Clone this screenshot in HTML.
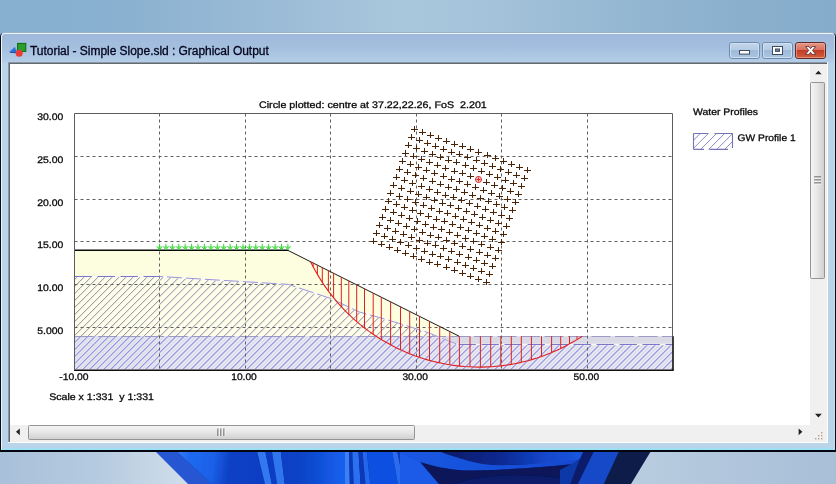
<!DOCTYPE html>
<html><head><meta charset="utf-8"><title>Graphical Output</title>
<style>
html,body{margin:0;padding:0}
body{width:836px;height:484px;overflow:hidden;position:relative;font-family:"Liberation Sans",sans-serif;background:#a3bdd6}
.desk-top{position:absolute;left:0;top:0;width:836px;height:40px;background:linear-gradient(90deg,#86aecf 0%,#8ab1d0 15%,#9dbdd7 35%,#a9c7dc 48%,#a5c3da 58%,#94b7d2 75%,#89afcd 90%,#86accb 100%)}
.desk-bot{position:absolute;left:0;top:450px;width:836px;height:34px;background:linear-gradient(90deg,#a8c0d9 0%,#b5cbe0 12%,#c6d6e6 18%,#cfdce9 22%,#b8ccdf 77%,#b2c7dc 85%,#a8bfd8 100%)}
.win{position:absolute;left:0;top:32px;width:836px;height:420px;box-sizing:border-box;background:#b9d3e9;border:1px solid #0c0c14;border-bottom:2px solid #05050f;border-top-color:rgba(60,80,100,0.25);border-radius:5px 5px 0 0;overflow:hidden}
.win .hl{position:absolute;left:0;top:0;right:0;bottom:0;border:1px solid #eef5fb;border-right-color:#c4daee;border-bottom-color:transparent;border-radius:4px 4px 0 0}
.tbar{position:absolute;left:1px;top:1px;width:832px;height:29px;background:linear-gradient(180deg,#9db8d9 0%,#a4bfde 45%,#b4cee8 100%)}
.bbar{position:absolute;left:1px;top:410px;width:832px;height:7px;background:linear-gradient(180deg,#bcd5e9 0,#b6d5ea 4.6px,#a0def3 5px,#9fe0f4 7px)}
.title{will-change:transform;position:absolute;left:28.6px;top:11.1px;font-size:12px;color:#04041c;-webkit-text-stroke:0.3px #04041c;white-space:nowrap;letter-spacing:-0.035px}
.f1{position:absolute;left:8px;top:62px;width:820px;height:381px;background:#fff}
.f2{position:absolute;left:8px;top:62px;width:819px;height:380px;background:#8d97a3}
.f3{position:absolute;left:9px;top:63px;width:818px;height:379px;background:#626a71}
.client{position:absolute;left:10px;top:64px;width:817px;height:378px;background:#fff}
</style></head><body>
<div class="desk-top"></div>
<div class="desk-bot"></div>
<svg width="836" height="34" viewBox="0 450 836 34" style="position:absolute;left:0;top:450px">
<defs>
<linearGradient id="wg1" x1="0" y1="0" x2="1" y2="0"><stop offset="0" stop-color="#0d40c4"/><stop offset="0.35" stop-color="#0c44c8"/><stop offset="1" stop-color="#1662f0"/></linearGradient>
<linearGradient id="wg2" gradientUnits="userSpaceOnUse" x1="180" y1="451" x2="262" y2="462"><stop offset="0" stop-color="#3278f4"/><stop offset="0.12" stop-color="#1e6af0"/><stop offset="0.42" stop-color="#1a60e8"/><stop offset="0.62" stop-color="#0d40c4"/><stop offset="1" stop-color="#0d3ec4"/></linearGradient>
<linearGradient id="wg3" gradientUnits="userSpaceOnUse" x1="450" y1="0" x2="600" y2="0"><stop offset="0" stop-color="#081c6a"/><stop offset="0.35" stop-color="#0b2a94"/><stop offset="0.65" stop-color="#1448cc"/><stop offset="1" stop-color="#1c5ee8"/></linearGradient>
<linearGradient id="wg4" gradientUnits="userSpaceOnUse" x1="405" y1="0" x2="585" y2="0"><stop offset="0" stop-color="#1a56e0"/><stop offset="0.6" stop-color="#184fd8"/><stop offset="1" stop-color="#1448cc"/></linearGradient>
<filter id="wb" x="-5%" y="-50%" width="110%" height="200%"><feGaussianBlur stdDeviation="0.7"/></filter>
<clipPath id="wc"><polygon points="155,451 651,451 631,484 188,484"/></clipPath>
</defs>
<g clip-path="url(#wc)"><g filter="url(#wb)">
<rect x="140" y="445" width="530" height="45" fill="#0a2a90"/>
<polygon points="140,445 170,445 218,490 170,490" fill="#2557d2"/>
<polygon points="170,445 255,445 267,490 218,490" fill="url(#wg2)"/>
<polygon points="255.5,445 264,445 273,490 266.5,490" fill="#3278f0"/>
<polygon points="264,445 271,445 278,490 273,490" fill="#0d3ec4"/>
<polygon points="271,445 280,445 285.5,490 278,490" fill="#2f74ee"/>
<polygon points="280,445 345,445 345,490 285.5,490" fill="url(#wg1)"/>
<polygon points="345,445 349,445 350,490 345,490" fill="#3a80f5"/>
<polygon points="349,445 352,445 354,490 350,490" fill="#0a38b8"/>
<polygon points="352,445 358,445 361,490 354,490" fill="#2a70f0"/>
<polygon points="358,445 362,445 366,490 361,490" fill="#0a38b8"/>
<polygon points="362,445 366,445 371,490 366,490" fill="#2468ec"/>
<polygon points="366,445 391,445 399,490 371,490" fill="#1050e0"/>
<polygon points="391,445 396,445 405,490 399,490" fill="#2a6cf0"/>
<polygon points="396,445 399,445 409,490 405,490" fill="#0c3cc0"/>
<polygon points="399,445 404,445 414,490 409,490" fill="#2a6cf0"/>
<polygon points="404,445 445,445 445,490 414,490" fill="#0e4ad4"/>
<path d="M430,445 L600,445 L600,468 C575,461 540,464 492,465 C478,464 462,460 438,451 Z" fill="url(#wg3)"/>
<path d="M400,445 L430,445 L438,451 C462,460 478,464 492,465 C520,466 545,463 585,459 L585,463 C545,467 515,469.5 474,470.5 C455,471 440,468 420,462 L400,453 Z" fill="url(#wg4)"/>
<path d="M420,462 C440,468 455,471 474,470.5 C515,469.5 545,467 585,463 L600,462 L600,490 L442,490 Z" fill="#071658"/>
<path d="M440,490 C470,474 520,473 560,478 L580,490 Z" fill="#0a2484" opacity="0.35"/>
<path d="M400,453 L420,462 L444,490 L400,490 Z" fill="#1a5ae8"/>
<polygon points="560,470 575,462 590,451 594,445 600,445 578,490 560,490" fill="#0d38a8"/>
<polygon points="586,445 598,445 576,490 568,490 577,466" fill="#0a1f6a"/>
<polygon points="597,445 623,445 602,490 575,490" fill="#1448c8"/>
<polygon points="622,445 660,445 640,490 601,490" fill="#0a1a4a"/>
</g></g>
</svg>

<div class="win"><div class="tbar"></div><div class="bbar"></div><div class="hl"></div>
<div class="title">Tutorial - Simple Slope.sld : Graphical Output</div>
</div>
<div class="f1"></div><div class="f2"></div><div class="f3"></div><div class="client"></div>
<svg class="chart" width="818" height="379" viewBox="9 63 818 379" style="position:absolute;left:9px;top:63px;will-change:transform">
<defs>
<pattern id="h1" width="6.9" height="6.9" patternUnits="userSpaceOnUse"><rect width="6.9" height="6.9" fill="#fdfdea"/><path d="M-1,7.9 L7.9,-1 M-1,1 L1,-1 M5.9,7.9 L7.9,5.9" stroke="#85859c" stroke-width="0.95" fill="none"/></pattern>
<pattern id="h2" width="6.9" height="6.9" patternUnits="userSpaceOnUse"><rect width="6.9" height="6.9" fill="#e8e8f6"/><path d="M-1,4.45 L4.45,-1 M2.45,7.9 L7.9,2.45" stroke="#d4d4da" stroke-width="1.3" fill="none"/><path d="M-1,7.9 L7.9,-1 M-1,1 L1,-1 M5.9,7.9 L7.9,5.9" stroke="#9292dc" stroke-width="1.1" fill="none"/></pattern>
<clipPath id="cw"><polygon points="74.5,276.5 160.0,276.5 288.3,284.4 331.4,298.7 359.0,311.9 380.5,317.8 404.4,325.0 428.3,332.7 447.5,340.6 458.5,344.5 673.0,344.5 673.0,369.5 74.5,369.5"/></clipPath>
<clipPath id="cu"><rect x="74.5" y="0" width="598.5" height="336.2"/></clipPath>
<clipPath id="cl"><rect x="74.5" y="336.2" width="598.5" height="33.30000000000001"/></clipPath>
</defs>
<polygon points="74.5,250.3 288.3,250.3 459.1,336.2 673.0,336.2 673.0,369.5 74.5,369.5" fill="#fdfddf"/>
<rect x="74.5" y="336.2" width="598.5" height="33.30000000000001" fill="#dadae6"/>
<clipPath id="czl"><rect x="74.5" y="240" width="85.0" height="140"/></clipPath>
<clipPath id="czr"><rect x="159.5" y="240" width="513.5" height="140"/></clipPath>
<g clip-path="url(#cw)">
<g clip-path="url(#cu)"><rect x="74.5" y="250.3" width="598.5" height="85.89999999999998" fill="#fdfdea"/>
<g stroke="#85859c" stroke-width="0.95" fill="none"><path clip-path="url(#czl)" d="M-80.8,372L43.2,248M-73.8,372L50.2,248M-66.8,372L57.2,248M-59.8,372L64.2,248M-52.8,372L71.2,248M-45.8,372L78.2,248M-38.8,372L85.2,248M-31.8,372L92.2,248M-24.8,372L99.2,248M-17.8,372L106.2,248M-10.8,372L113.2,248M-3.8,372L120.2,248M3.2,372L127.2,248M10.2,372L134.2,248M17.2,372L141.2,248M24.2,372L148.2,248M31.2,372L155.2,248M38.2,372L162.2,248M45.2,372L169.2,248M52.2,372L176.2,248M59.2,372L183.2,248M66.2,372L190.2,248M73.2,372L197.2,248M80.2,372L204.2,248M87.2,372L211.2,248M94.2,372L218.2,248M101.2,372L225.2,248M108.2,372L232.2,248M115.2,372L239.2,248M122.2,372L246.2,248M129.2,372L253.2,248M136.2,372L260.2,248M143.2,372L267.2,248M150.2,372L274.2,248M157.2,372L281.2,248M164.2,372L288.2,248M171.2,372L295.2,248M178.2,372L302.2,248"/><path clip-path="url(#czr)" d="M36.3,372L160.3,248M44.3,372L168.3,248M52.3,372L176.3,248M60.3,372L184.3,248M68.3,372L192.3,248M76.3,372L200.3,248M84.3,372L208.3,248M92.3,372L216.3,248M100.3,372L224.3,248M108.3,372L232.3,248M116.3,372L240.3,248M124.3,372L248.3,248M132.3,372L256.3,248M140.3,372L264.3,248M148.3,372L272.3,248M156.3,372L280.3,248M164.3,372L288.3,248M172.3,372L296.3,248M180.3,372L304.3,248M188.3,372L312.3,248M196.3,372L320.3,248M204.3,372L328.3,248M212.3,372L336.3,248M220.3,372L344.3,248M228.3,372L352.3,248M236.3,372L360.3,248M244.3,372L368.3,248M252.3,372L376.3,248M260.3,372L384.3,248M268.3,372L392.3,248M276.3,372L400.3,248M284.3,372L408.3,248M292.3,372L416.3,248M300.3,372L424.3,248M308.3,372L432.3,248M316.3,372L440.3,248M324.3,372L448.3,248M332.3,372L456.3,248M340.3,372L464.3,248M348.3,372L472.3,248M356.3,372L480.3,248M364.3,372L488.3,248M372.3,372L496.3,248M380.3,372L504.3,248M388.3,372L512.3,248M396.3,372L520.3,248M404.3,372L528.3,248M412.3,372L536.3,248M420.3,372L544.3,248M428.3,372L552.3,248M436.3,372L560.3,248M444.3,372L568.3,248M452.3,372L576.3,248M460.3,372L584.3,248M468.3,372L592.3,248M476.3,372L600.3,248M484.3,372L608.3,248M492.3,372L616.3,248M500.3,372L624.3,248M508.3,372L632.3,248M516.3,372L640.3,248M524.3,372L648.3,248M532.3,372L656.3,248M540.3,372L664.3,248M548.3,372L672.3,248M556.3,372L680.3,248M564.3,372L688.3,248M572.3,372L696.3,248M580.3,372L704.3,248M588.3,372L712.3,248M596.3,372L720.3,248M604.3,372L728.3,248M612.3,372L736.3,248M620.3,372L744.3,248M628.3,372L752.3,248M636.3,372L760.3,248M644.3,372L768.3,248M652.3,372L776.3,248M660.3,372L784.3,248M668.3,372L792.3,248M676.3,372L800.3,248M684.3,372L808.3,248M692.3,372L816.3,248M700.3,372L824.3,248"/></g></g>
<g clip-path="url(#cl)"><rect x="74.5" y="336.2" width="598.5" height="35.30000000000001" fill="#e8e8f6"/>
<g stroke="#dcdce4" stroke-width="1.1" fill="none"><path clip-path="url(#czl)" d="M-77.3,372L46.7,248M-70.3,372L53.7,248M-63.3,372L60.7,248M-56.3,372L67.7,248M-49.3,372L74.7,248M-42.3,372L81.7,248M-35.3,372L88.7,248M-28.3,372L95.7,248M-21.3,372L102.7,248M-14.3,372L109.7,248M-7.3,372L116.7,248M-0.3,372L123.7,248M6.7,372L130.7,248M13.7,372L137.7,248M20.7,372L144.7,248M27.7,372L151.7,248M34.7,372L158.7,248M41.7,372L165.7,248M48.7,372L172.7,248M55.7,372L179.7,248M62.7,372L186.7,248M69.7,372L193.7,248M76.7,372L200.7,248M83.7,372L207.7,248M90.7,372L214.7,248M97.7,372L221.7,248M104.7,372L228.7,248M111.7,372L235.7,248M118.7,372L242.7,248M125.7,372L249.7,248M132.7,372L256.7,248M139.7,372L263.7,248M146.7,372L270.7,248M153.7,372L277.7,248M160.7,372L284.7,248M167.7,372L291.7,248M174.7,372L298.7,248M181.7,372L305.7,248"/><path clip-path="url(#czr)" d="M40.3,372L164.3,248M48.3,372L172.3,248M56.3,372L180.3,248M64.3,372L188.3,248M72.3,372L196.3,248M80.3,372L204.3,248M88.3,372L212.3,248M96.3,372L220.3,248M104.3,372L228.3,248M112.3,372L236.3,248M120.3,372L244.3,248M128.3,372L252.3,248M136.3,372L260.3,248M144.3,372L268.3,248M152.3,372L276.3,248M160.3,372L284.3,248M168.3,372L292.3,248M176.3,372L300.3,248M184.3,372L308.3,248M192.3,372L316.3,248M200.3,372L324.3,248M208.3,372L332.3,248M216.3,372L340.3,248M224.3,372L348.3,248M232.3,372L356.3,248M240.3,372L364.3,248M248.3,372L372.3,248M256.3,372L380.3,248M264.3,372L388.3,248M272.3,372L396.3,248M280.3,372L404.3,248M288.3,372L412.3,248M296.3,372L420.3,248M304.3,372L428.3,248M312.3,372L436.3,248M320.3,372L444.3,248M328.3,372L452.3,248M336.3,372L460.3,248M344.3,372L468.3,248M352.3,372L476.3,248M360.3,372L484.3,248M368.3,372L492.3,248M376.3,372L500.3,248M384.3,372L508.3,248M392.3,372L516.3,248M400.3,372L524.3,248M408.3,372L532.3,248M416.3,372L540.3,248M424.3,372L548.3,248M432.3,372L556.3,248M440.3,372L564.3,248M448.3,372L572.3,248M456.3,372L580.3,248M464.3,372L588.3,248M472.3,372L596.3,248M480.3,372L604.3,248M488.3,372L612.3,248M496.3,372L620.3,248M504.3,372L628.3,248M512.3,372L636.3,248M520.3,372L644.3,248M528.3,372L652.3,248M536.3,372L660.3,248M544.3,372L668.3,248M552.3,372L676.3,248M560.3,372L684.3,248M568.3,372L692.3,248M576.3,372L700.3,248M584.3,372L708.3,248M592.3,372L716.3,248M600.3,372L724.3,248M608.3,372L732.3,248M616.3,372L740.3,248M624.3,372L748.3,248M632.3,372L756.3,248M640.3,372L764.3,248M648.3,372L772.3,248M656.3,372L780.3,248M664.3,372L788.3,248M672.3,372L796.3,248M680.3,372L804.3,248M688.3,372L812.3,248M696.3,372L820.3,248M704.3,372L828.3,248"/></g>
<g stroke="#9292dc" stroke-width="1.1" fill="none"><path clip-path="url(#czl)" d="M-80.8,372L43.2,248M-73.8,372L50.2,248M-66.8,372L57.2,248M-59.8,372L64.2,248M-52.8,372L71.2,248M-45.8,372L78.2,248M-38.8,372L85.2,248M-31.8,372L92.2,248M-24.8,372L99.2,248M-17.8,372L106.2,248M-10.8,372L113.2,248M-3.8,372L120.2,248M3.2,372L127.2,248M10.2,372L134.2,248M17.2,372L141.2,248M24.2,372L148.2,248M31.2,372L155.2,248M38.2,372L162.2,248M45.2,372L169.2,248M52.2,372L176.2,248M59.2,372L183.2,248M66.2,372L190.2,248M73.2,372L197.2,248M80.2,372L204.2,248M87.2,372L211.2,248M94.2,372L218.2,248M101.2,372L225.2,248M108.2,372L232.2,248M115.2,372L239.2,248M122.2,372L246.2,248M129.2,372L253.2,248M136.2,372L260.2,248M143.2,372L267.2,248M150.2,372L274.2,248M157.2,372L281.2,248M164.2,372L288.2,248M171.2,372L295.2,248M178.2,372L302.2,248"/><path clip-path="url(#czr)" d="M36.3,372L160.3,248M44.3,372L168.3,248M52.3,372L176.3,248M60.3,372L184.3,248M68.3,372L192.3,248M76.3,372L200.3,248M84.3,372L208.3,248M92.3,372L216.3,248M100.3,372L224.3,248M108.3,372L232.3,248M116.3,372L240.3,248M124.3,372L248.3,248M132.3,372L256.3,248M140.3,372L264.3,248M148.3,372L272.3,248M156.3,372L280.3,248M164.3,372L288.3,248M172.3,372L296.3,248M180.3,372L304.3,248M188.3,372L312.3,248M196.3,372L320.3,248M204.3,372L328.3,248M212.3,372L336.3,248M220.3,372L344.3,248M228.3,372L352.3,248M236.3,372L360.3,248M244.3,372L368.3,248M252.3,372L376.3,248M260.3,372L384.3,248M268.3,372L392.3,248M276.3,372L400.3,248M284.3,372L408.3,248M292.3,372L416.3,248M300.3,372L424.3,248M308.3,372L432.3,248M316.3,372L440.3,248M324.3,372L448.3,248M332.3,372L456.3,248M340.3,372L464.3,248M348.3,372L472.3,248M356.3,372L480.3,248M364.3,372L488.3,248M372.3,372L496.3,248M380.3,372L504.3,248M388.3,372L512.3,248M396.3,372L520.3,248M404.3,372L528.3,248M412.3,372L536.3,248M420.3,372L544.3,248M428.3,372L552.3,248M436.3,372L560.3,248M444.3,372L568.3,248M452.3,372L576.3,248M460.3,372L584.3,248M468.3,372L592.3,248M476.3,372L600.3,248M484.3,372L608.3,248M492.3,372L616.3,248M500.3,372L624.3,248M508.3,372L632.3,248M516.3,372L640.3,248M524.3,372L648.3,248M532.3,372L656.3,248M540.3,372L664.3,248M548.3,372L672.3,248M556.3,372L680.3,248M564.3,372L688.3,248M572.3,372L696.3,248M580.3,372L704.3,248M588.3,372L712.3,248M596.3,372L720.3,248M604.3,372L728.3,248M612.3,372L736.3,248M620.3,372L744.3,248M628.3,372L752.3,248M636.3,372L760.3,248M644.3,372L768.3,248M652.3,372L776.3,248M660.3,372L784.3,248M668.3,372L792.3,248M676.3,372L800.3,248M684.3,372L808.3,248M692.3,372L816.3,248M700.3,372L824.3,248"/></g></g>
</g>
<line x1="74.5" y1="336.5" x2="673.0" y2="336.5" stroke="#9292be" stroke-width="0.9" stroke-dasharray="19,4.5"/>
<line x1="159.5" y1="113.5" x2="159.5" y2="369.5" stroke="#606060" stroke-width="1" stroke-dasharray="3,3"/>
<line x1="245.5" y1="113.5" x2="245.5" y2="369.5" stroke="#606060" stroke-width="1" stroke-dasharray="3,3"/>
<line x1="330.5" y1="113.5" x2="330.5" y2="369.5" stroke="#606060" stroke-width="1" stroke-dasharray="3,3"/>
<line x1="416.5" y1="113.5" x2="416.5" y2="369.5" stroke="#606060" stroke-width="1" stroke-dasharray="3,3"/>
<line x1="501.5" y1="113.5" x2="501.5" y2="369.5" stroke="#606060" stroke-width="1" stroke-dasharray="3,3"/>
<line x1="587.5" y1="113.5" x2="587.5" y2="369.5" stroke="#606060" stroke-width="1" stroke-dasharray="3,3"/>
<line x1="74.5" y1="156.5" x2="673.0" y2="156.5" stroke="#606060" stroke-width="1" stroke-dasharray="3,3"/>
<line x1="74.5" y1="199.5" x2="673.0" y2="199.5" stroke="#606060" stroke-width="1" stroke-dasharray="3,3"/>
<line x1="74.5" y1="241.5" x2="673.0" y2="241.5" stroke="#606060" stroke-width="1" stroke-dasharray="3,3"/>
<line x1="74.5" y1="284.5" x2="673.0" y2="284.5" stroke="#606060" stroke-width="1" stroke-dasharray="3,3"/>
<line x1="74.5" y1="327.5" x2="673.0" y2="327.5" stroke="#606060" stroke-width="1" stroke-dasharray="3,3"/>
<polyline points="74.5,276.5 160.0,276.5 288.3,284.4 331.4,298.7 359.0,311.9 380.5,317.8 404.4,325.0 428.3,332.7 447.5,340.6 458.5,344.5 673.0,344.5" fill="none" stroke="#fbfbf6" stroke-width="1.3"/>
<polyline points="74.5,276.5 160.0,276.5" fill="none" stroke="#7e76cc" stroke-width="1.05" stroke-dasharray="17.4,5.6"/>
<polyline points="160.0,276.5 288.3,284.4 331.4,298.7 359.0,311.9 380.5,317.8 404.4,325.0 428.3,332.7 447.5,340.6 458.5,344.5" fill="none" stroke="#8f89d2" stroke-width="0.9" stroke-dasharray="15,4" stroke-dashoffset="12"/>
<polyline points="458.5,344.5 673.0,344.5" fill="none" stroke="#7e76cc" stroke-width="1.0" stroke-dasharray="17.4,5.6"/>
<polyline points="74.5,250.3 288.3,250.3" fill="none" stroke="#0a0a0a" stroke-width="1.5"/>
<polyline points="287.8,250.3 459.1,336.2" fill="none" stroke="#1a1a1a" stroke-width="1.0"/>
<path d="M313.2,262.8V266.9M317.4,264.9V274.4M322.3,267.4V282.3M328.4,270.5V291.1M333.6,273.1V297.8M341.3,277.0V306.7M348.8,280.7V314.4M356.7,284.7V321.6M364.5,288.6V328.0M373.2,293.0V334.3M381.3,297.1V339.5M390.6,301.7V344.9M400.5,306.7V349.8M409.7,311.4V353.8M419.5,316.3V357.3M429.5,321.3V360.4M439.7,326.4V362.9M449.8,331.5V364.8M459.4,336.2V366.1M470.0,336.2V366.9M480.4,336.2V367.1M490.7,336.2V366.7M500.8,336.2V365.9M511.3,336.2V364.3M521.3,336.2V362.3M531.4,336.2V359.7M541.5,336.2V356.5M551.6,336.2V352.6M560.7,336.2V348.5M569.5,336.2V343.9M577.0,336.2V339.6" stroke="#e02020" stroke-width="1" fill="none"/>
<polyline points="310.4,261.4 315.0,270.2 319.5,277.9 324.0,284.9 328.6,291.3 333.1,297.2 337.6,302.6 342.2,307.6 346.7,312.3 351.2,316.7 355.8,320.8 360.3,324.6 364.8,328.2 369.4,331.6 373.9,334.7 378.4,337.7 382.9,340.5 387.5,343.1 392.0,345.6 396.5,347.9 401.1,350.1 405.6,352.1 410.1,353.9 414.7,355.7 419.2,357.2 423.7,358.7 428.3,360.1 432.8,361.3 437.3,362.4 441.9,363.3 446.4,364.2 450.9,365.0 455.5,365.6 460.0,366.1 464.5,366.5 469.1,366.8 473.6,367.0 478.1,367.1 482.6,367.1 487.2,366.9 491.7,366.7 496.2,366.3 500.8,365.9 505.3,365.3 509.8,364.6 514.4,363.8 518.9,362.9 523.4,361.8 528.0,360.7 532.5,359.4 537.0,358.0 541.6,356.4 546.1,354.8 550.6,353.0 555.2,351.0 559.7,349.0 564.2,346.7 568.7,344.3 573.3,341.8 577.8,339.1 582.3,336.2" fill="none" stroke="#e02020" stroke-width="1.1"/>
<path d="M159.5,243.8V249M156.8,246.3L159.5,249.8L162.2,246.3M157.9,247L161.1,247M165.9,243.8V249M163.2,246.3L165.9,249.8L168.6,246.3M164.3,247L167.5,247M172.3,243.8V249M169.6,246.3L172.3,249.8L175.0,246.3M170.7,247L173.9,247M178.8,243.8V249M176.1,246.3L178.8,249.8L181.5,246.3M177.2,247L180.4,247M185.2,243.8V249M182.5,246.3L185.2,249.8L187.9,246.3M183.6,247L186.8,247M191.6,243.8V249M188.9,246.3L191.6,249.8L194.3,246.3M190.0,247L193.2,247M198.0,243.8V249M195.3,246.3L198.0,249.8L200.7,246.3M196.4,247L199.6,247M204.4,243.8V249M201.7,246.3L204.4,249.8L207.1,246.3M202.8,247L206.0,247M210.9,243.8V249M208.2,246.3L210.9,249.8L213.6,246.3M209.3,247L212.5,247M217.3,243.8V249M214.6,246.3L217.3,249.8L220.0,246.3M215.7,247L218.9,247M223.7,243.8V249M221.0,246.3L223.7,249.8L226.4,246.3M222.1,247L225.3,247M230.1,243.8V249M227.4,246.3L230.1,249.8L232.8,246.3M228.5,247L231.7,247M236.5,243.8V249M233.8,246.3L236.5,249.8L239.2,246.3M234.9,247L238.1,247M243.0,243.8V249M240.3,246.3L243.0,249.8L245.7,246.3M241.4,247L244.6,247M249.4,243.8V249M246.7,246.3L249.4,249.8L252.1,246.3M247.8,247L251.0,247M255.8,243.8V249M253.1,246.3L255.8,249.8L258.5,246.3M254.2,247L257.4,247M262.2,243.8V249M259.5,246.3L262.2,249.8L264.9,246.3M260.6,247L263.8,247M268.6,243.8V249M265.9,246.3L268.6,249.8L271.3,246.3M267.0,247L270.2,247M275.1,243.8V249M272.4,246.3L275.1,249.8L277.8,246.3M273.5,247L276.7,247M281.5,243.8V249M278.8,246.3L281.5,249.8L284.2,246.3M279.9,247L283.1,247M287.9,243.8V249M285.2,246.3L287.9,249.8L290.6,246.3M286.3,247L289.5,247" stroke="#38d838" stroke-width="1" fill="none"/>
<path d="M411,129.5h7M414.5,126v6M408,137.5h7M411.5,134v6M405,145.5h7M408.5,142v6M402,153.5h7M405.5,150v6M399,161.5h7M402.5,158v6M396,169.5h7M399.5,166v6M393,177.5h7M396.5,174v6M390,185.5h7M393.5,182v6M387,193.5h7M390.5,190v6M385,201.5h7M388.5,198v6M382,209.5h7M385.5,206v6M379,217.5h7M382.5,214v6M376,225.5h7M379.5,222v6M373,233.5h7M376.5,230v6M370,241.5h7M373.5,238v6M419,132.5h7M422.5,129v6M416,140.5h7M419.5,137v6M413,148.5h7M416.5,145v6M410,156.5h7M413.5,153v6M407,164.5h7M410.5,161v6M404,172.5h7M407.5,169v6M401,180.5h7M404.5,177v6M398,188.5h7M401.5,185v6M396,196.5h7M399.5,193v6M393,204.5h7M396.5,201v6M390,212.5h7M393.5,209v6M387,220.5h7M390.5,217v6M384,228.5h7M387.5,225v6M381,236.5h7M384.5,233v6M378,244.5h7M381.5,241v6M427,135.5h7M430.5,132v6M424,143.5h7M427.5,140v6M421,151.5h7M424.5,148v6M418,159.5h7M421.5,156v6M415,167.5h7M418.5,164v6M412,175.5h7M415.5,172v6M409,183.5h7M412.5,180v6M407,191.5h7M410.5,188v6M404,199.5h7M407.5,196v6M401,207.5h7M404.5,204v6M398,215.5h7M401.5,212v6M395,223.5h7M398.5,220v6M392,231.5h7M395.5,228v6M389,239.5h7M392.5,236v6M386,247.5h7M389.5,244v6M435,138.5h7M438.5,135v6M432,146.5h7M435.5,143v6M429,154.5h7M432.5,151v6M426,162.5h7M429.5,159v6M423,170.5h7M426.5,167v6M420,178.5h7M423.5,175v6M418,186.5h7M421.5,183v6M415,194.5h7M418.5,191v6M412,202.5h7M415.5,199v6M409,210.5h7M412.5,207v6M406,218.5h7M409.5,215v6M403,226.5h7M406.5,223v6M400,234.5h7M403.5,231v6M397,242.5h7M400.5,239v6M394,250.5h7M397.5,247v6M443,141.5h7M446.5,138v6M440,149.5h7M443.5,146v6M437,157.5h7M440.5,154v6M434,165.5h7M437.5,162v6M431,173.5h7M434.5,170v6M429,181.5h7M432.5,178v6M426,189.5h7M429.5,186v6M423,197.5h7M426.5,194v6M420,205.5h7M423.5,202v6M417,213.5h7M420.5,210v6M414,221.5h7M417.5,218v6M411,229.5h7M414.5,226v6M408,237.5h7M411.5,234v6M405,245.5h7M408.5,242v6M402,253.5h7M405.5,250v6M451,144.5h7M454.5,141v6M448,152.5h7M451.5,149v6M445,160.5h7M448.5,157v6M442,168.5h7M445.5,165v6M440,176.5h7M443.5,173v6M437,184.5h7M440.5,181v6M434,192.5h7M437.5,189v6M431,200.5h7M434.5,197v6M428,208.5h7M431.5,205v6M425,216.5h7M428.5,213v6M422,224.5h7M425.5,221v6M419,232.5h7M422.5,229v6M416,240.5h7M419.5,237v6M413,248.5h7M416.5,245v6M410,256.5h7M413.5,253v6M459,146.5h7M462.5,143v6M456,154.5h7M459.5,151v6M453,162.5h7M456.5,159v6M451,171.5h7M454.5,168v6M448,179.5h7M451.5,176v6M445,187.5h7M448.5,184v6M442,195.5h7M445.5,192v6M439,203.5h7M442.5,200v6M436,211.5h7M439.5,208v6M433,219.5h7M436.5,216v6M430,227.5h7M433.5,224v6M427,235.5h7M430.5,232v6M424,243.5h7M427.5,240v6M421,251.5h7M424.5,248v6M418,259.5h7M421.5,256v6M467,149.5h7M470.5,146v6M464,157.5h7M467.5,154v6M462,165.5h7M465.5,162v6M459,173.5h7M462.5,170v6M456,181.5h7M459.5,178v6M453,189.5h7M456.5,186v6M450,197.5h7M453.5,194v6M447,205.5h7M450.5,202v6M444,213.5h7M447.5,210v6M441,221.5h7M444.5,218v6M438,229.5h7M441.5,226v6M435,237.5h7M438.5,234v6M432,245.5h7M435.5,242v6M429,254.5h7M432.5,251v6M426,262.5h7M429.5,259v6M475,152.5h7M478.5,149v6M473,160.5h7M476.5,157v6M470,168.5h7M473.5,165v6M467,176.5h7M470.5,173v6M464,184.5h7M467.5,181v6M461,192.5h7M464.5,189v6M458,200.5h7M461.5,197v6M455,208.5h7M458.5,205v6M452,216.5h7M455.5,213v6M449,224.5h7M452.5,221v6M446,232.5h7M449.5,229v6M443,240.5h7M446.5,237v6M440,248.5h7M443.5,245v6M437,256.5h7M440.5,253v6M434,264.5h7M437.5,261v6M484,155.5h7M487.5,152v6M481,163.5h7M484.5,160v6M478,171.5h7M481.5,168v6M475,179.5h7M478.5,176v6M472,187.5h7M475.5,184v6M469,195.5h7M472.5,192v6M466,203.5h7M469.5,200v6M463,211.5h7M466.5,208v6M460,219.5h7M463.5,216v6M457,227.5h7M460.5,224v6M454,235.5h7M457.5,232v6M451,243.5h7M454.5,240v6M448,251.5h7M451.5,248v6M445,259.5h7M448.5,256v6M443,267.5h7M446.5,264v6M492,158.5h7M495.5,155v6M489,166.5h7M492.5,163v6M486,174.5h7M489.5,171v6M483,182.5h7M486.5,179v6M480,190.5h7M483.5,187v6M477,198.5h7M480.5,195v6M474,206.5h7M477.5,203v6M471,214.5h7M474.5,211v6M468,222.5h7M471.5,219v6M465,230.5h7M468.5,227v6M462,238.5h7M465.5,235v6M459,246.5h7M462.5,243v6M456,254.5h7M459.5,251v6M454,262.5h7M457.5,259v6M451,270.5h7M454.5,267v6M500,161.5h7M503.5,158v6M497,169.5h7M500.5,166v6M494,177.5h7M497.5,174v6M491,185.5h7M494.5,182v6M488,193.5h7M491.5,190v6M485,201.5h7M488.5,198v6M482,209.5h7M485.5,206v6M479,217.5h7M482.5,214v6M476,225.5h7M479.5,222v6M473,233.5h7M476.5,230v6M470,241.5h7M473.5,238v6M467,249.5h7M470.5,246v6M465,257.5h7M468.5,254v6M462,265.5h7M465.5,262v6M459,273.5h7M462.5,270v6M508,164.5h7M511.5,161v6M505,172.5h7M508.5,169v6M502,180.5h7M505.5,177v6M499,188.5h7M502.5,185v6M496,196.5h7M499.5,193v6M493,204.5h7M496.5,201v6M490,212.5h7M493.5,209v6M487,220.5h7M490.5,217v6M484,228.5h7M487.5,225v6M481,236.5h7M484.5,233v6M478,244.5h7M481.5,241v6M476,252.5h7M479.5,249v6M473,260.5h7M476.5,257v6M470,268.5h7M473.5,265v6M467,276.5h7M470.5,273v6M516,167.5h7M519.5,164v6M513,175.5h7M516.5,172v6M510,183.5h7M513.5,180v6M507,191.5h7M510.5,188v6M504,199.5h7M507.5,196v6M501,207.5h7M504.5,204v6M498,215.5h7M501.5,212v6M495,223.5h7M498.5,220v6M492,231.5h7M495.5,228v6M489,239.5h7M492.5,236v6M487,247.5h7M490.5,244v6M484,255.5h7M487.5,252v6M481,263.5h7M484.5,260v6M478,271.5h7M481.5,268v6M475,279.5h7M478.5,276v6M524,170.5h7M527.5,167v6M521,178.5h7M524.5,175v6M518,186.5h7M521.5,183v6M515,194.5h7M518.5,191v6M512,202.5h7M515.5,199v6M509,210.5h7M512.5,207v6M506,218.5h7M509.5,215v6M503,226.5h7M506.5,223v6M500,234.5h7M503.5,231v6M498,242.5h7M501.5,239v6M495,250.5h7M498.5,247v6M492,258.5h7M495.5,255v6M489,266.5h7M492.5,263v6M486,274.5h7M489.5,271v6M483,282.5h7M486.5,279v6" stroke="#4a2206" stroke-width="1" fill="none"/>
<circle cx="478.5" cy="179.5" r="3" fill="#ffd0d0" stroke="#e02020" stroke-width="1"/><path d="M476.5,179.5h4M478.5,177.5v4" stroke="#e02020" stroke-width="1"/>
<path d="M74.5,369.5V113.5H672.5" fill="none" stroke="#5c5c5c" stroke-width="1"/>
<path d="M74.0,370.3H673.7" fill="none" stroke="#111" stroke-width="1.4"/>
<path d="M672.5,113.5V336.2" fill="none" stroke="#5c5c5c" stroke-width="1"/>
<path d="M673.0,336.2V370.3" fill="none" stroke="#111" stroke-width="1.6"/>
<clipPath id="clg"><rect x="693.5" y="133.5" width="39" height="16"/></clipPath>
<g clip-path="url(#clg)" stroke="#8a8acc" stroke-width="1" fill="none">
<line x1="683.7" y1="150" x2="700.7" y2="133"/>
<line x1="691.8" y1="150" x2="708.8" y2="133"/>
<line x1="700.0" y1="150" x2="717.0" y2="133"/>
<line x1="708.1" y1="150" x2="725.1" y2="133"/>
<line x1="716.2" y1="150" x2="733.2" y2="133"/>
<line x1="724.0" y1="150" x2="741.0" y2="133"/>
</g>
<g stroke="#7474b4" stroke-width="1.1" fill="none"><path d="M693.5,133.5H708.3M714.4,133.5H732.7"/>
<path d="M693.5,149.4H704M709.4,149.4H728"/>
<path d="M693.5,133.5V149.4M732.5,133.5V148"/></g>
<g font-family="Liberation Sans, sans-serif" fill="#0a0a0a" stroke="#0a0a0a" stroke-width="0.3">
<text transform="translate(37.2,120.10000000000002) scale(1.0980,1)" font-size="9.5" text-rendering="geometricPrecision">30.00</text>
<text transform="translate(37.2,162.80000000000004) scale(1.0980,1)" font-size="9.5" text-rendering="geometricPrecision">25.00</text>
<text transform="translate(37.2,205.50000000000003) scale(1.0980,1)" font-size="9.5" text-rendering="geometricPrecision">20.00</text>
<text transform="translate(37.2,248.20000000000002) scale(1.0980,1)" font-size="9.5" text-rendering="geometricPrecision">15.00</text>
<text transform="translate(37.2,290.90000000000003) scale(1.0980,1)" font-size="9.5" text-rendering="geometricPrecision">10.00</text>
<text transform="translate(37.2,333.6) scale(1.0980,1)" font-size="9.5" text-rendering="geometricPrecision">5.000</text>
<text transform="translate(59.3,380.0) scale(1.0878,1)" font-size="9.5" text-rendering="geometricPrecision">-10.00</text>
<text transform="translate(231.20000000000002,380.0) scale(1.0770,1)" font-size="9.5" text-rendering="geometricPrecision">10.00</text>
<text transform="translate(402.4000000000001,380.0) scale(1.0770,1)" font-size="9.5" text-rendering="geometricPrecision">30.00</text>
<text transform="translate(573.6,380.0) scale(1.0770,1)" font-size="9.5" text-rendering="geometricPrecision">50.00</text>
<text transform="translate(259.0,108.4) scale(1.1263,1)" font-size="9.5" text-rendering="geometricPrecision">Circle plotted: centre at 37.22,22.26, FoS&#160; 2.201</text>
<text transform="translate(49.2,400.3) scale(1.1138,1)" font-size="9.5" text-rendering="geometricPrecision">Scale x 1:331&#160; y 1:331</text>
<text transform="translate(693,114.6) scale(1.0961,1)" font-size="9.5" text-rendering="geometricPrecision">Water Profiles</text>
<text transform="translate(737.6,140.8) scale(1.0772,1)" font-size="9.5" text-rendering="geometricPrecision">GW Profile 1</text>
</g>
</svg>

<svg width="836" height="484" viewBox="0 0 836 484" style="position:absolute;left:0;top:0">
<defs>
<linearGradient id="bt" x1="0" y1="0" x2="0" y2="1"><stop offset="0" stop-color="#c3d6ea"/><stop offset="0.48" stop-color="#b4cbe4"/><stop offset="0.5" stop-color="#9fbad9"/><stop offset="1" stop-color="#aac6e2"/></linearGradient>
<linearGradient id="bc" x1="0" y1="0" x2="0" y2="1"><stop offset="0" stop-color="#e59a8a"/><stop offset="0.46" stop-color="#d9705e"/><stop offset="0.5" stop-color="#c43c28"/><stop offset="1" stop-color="#d4623c"/></linearGradient>
<linearGradient id="vth" x1="0" y1="0" x2="1" y2="0"><stop offset="0" stop-color="#f6f6f6"/><stop offset="0.5" stop-color="#e6e6e6"/><stop offset="1" stop-color="#cfcfcf"/></linearGradient>
<linearGradient id="hth" x1="0" y1="0" x2="0" y2="1"><stop offset="0" stop-color="#f6f6f6"/><stop offset="0.5" stop-color="#e6e6e6"/><stop offset="1" stop-color="#cfcfcf"/></linearGradient>
</defs>
<!-- icon -->
<polygon points="9.4,52 14.7,47 17.6,52.8" fill="#2a6fd0" stroke="#5a98e6" stroke-width="0.7" stroke-linejoin="round"/><path d="M10,52.2L17.4,52.9" stroke="#1c4aa0" stroke-width="1"/>
<rect x="17.6" y="43.4" width="8.2" height="8" fill="#2aa02a" stroke="#0d6a10" stroke-width="1"/>
<circle cx="19.2" cy="53.2" r="3.5" fill="#ee3a36"/>
<!-- buttons -->
<rect x="729.5" y="42.5" width="30" height="16" rx="2.5" fill="url(#bt)" stroke="#6f8cae" stroke-width="1"/>
<rect x="730.5" y="43.5" width="28" height="14" rx="1.5" fill="none" stroke="#d6e4f2" stroke-width="1" opacity="0.8"/>
<rect x="762.5" y="42.5" width="30" height="16" rx="2.5" fill="url(#bt)" stroke="#6f8cae" stroke-width="1"/>
<rect x="763.5" y="43.5" width="28" height="14" rx="1.5" fill="none" stroke="#d6e4f2" stroke-width="1" opacity="0.8"/>
<rect x="795.5" y="42.5" width="30" height="16" rx="2.5" fill="url(#bc)" stroke="#5c2b2a" stroke-width="1"/>
<rect x="796.5" y="43.5" width="28" height="14" rx="1.5" fill="none" stroke="#f0b0a0" stroke-width="1" opacity="0.6"/>
<rect x="739.5" y="50.5" width="10" height="3.6" fill="#fff" stroke="#3d4c5e" stroke-width="1"/>
<rect x="772.5" y="46.5" width="10" height="8" fill="#fff" stroke="#3d4c5e" stroke-width="1"/>
<rect x="775.5" y="49" width="4" height="2.4" fill="#7088a6" stroke="#3d4c5e" stroke-width="1"/>
<path d="M805.6,46.6 L809,46.6 L810.6,48.6 L812.2,46.6 L815.6,46.6 L812.5,50.4 L815.8,54.4 L812.3,54.4 L810.6,52.3 L808.9,54.4 L805.4,54.4 L808.7,50.4 Z" fill="#fff" stroke="#5a3030" stroke-width="0.9" stroke-linejoin="round"/>
<!-- vscroll -->
<rect x="810" y="64" width="17" height="361" fill="#f0f0f0"/>
<polygon points="815.2,74.3 818.4,70.8 821.6,74.3" fill="#222"/>
<polygon points="815,413.8 821.8,413.8 818.4,417.6" fill="#222"/>
<rect x="810.5" y="82.5" width="14" height="196" rx="1" fill="url(#vth)" stroke="#949494" stroke-width="1"/>
<path d="M814,177H821M814,180H821M814,183H821" stroke="#444" stroke-width="1"/>
<path d="M814,178H821M814,181H821M814,184H821" stroke="#fff" stroke-width="1" opacity="0.8"/>
<!-- hscroll -->
<rect x="10" y="425" width="800" height="17" fill="#f0f0f0"/>
<rect x="810" y="425" width="17" height="17" fill="#f0f0f0"/>
<polygon points="19.8,428.4 19.8,435.2 16,431.8" fill="#222"/>
<polygon points="798.6,428.4 798.6,435.2 802.4,431.8" fill="#222"/>
<rect x="28.5" y="425.5" width="386" height="14" rx="1" fill="url(#hth)" stroke="#949494" stroke-width="1"/>
<path d="M218,428.5V436M221,428.5V436M224,428.5V436" stroke="#444" stroke-width="1"/>
<path d="M219,428.5V436M222,428.5V436M225,428.5V436" stroke="#fff" stroke-width="1" opacity="0.8"/>
<!-- size grip -->
<g fill="#b8a08a"><rect x="821" y="432" width="1.4" height="1.4"/><rect x="821" y="435" width="1.4" height="1.4"/><rect x="821" y="438" width="1.4" height="1.4"/><rect x="818" y="435" width="1.4" height="1.4"/><rect x="818" y="438" width="1.4" height="1.4"/><rect x="815" y="438" width="1.4" height="1.4"/></g>
</svg>

</body></html>
